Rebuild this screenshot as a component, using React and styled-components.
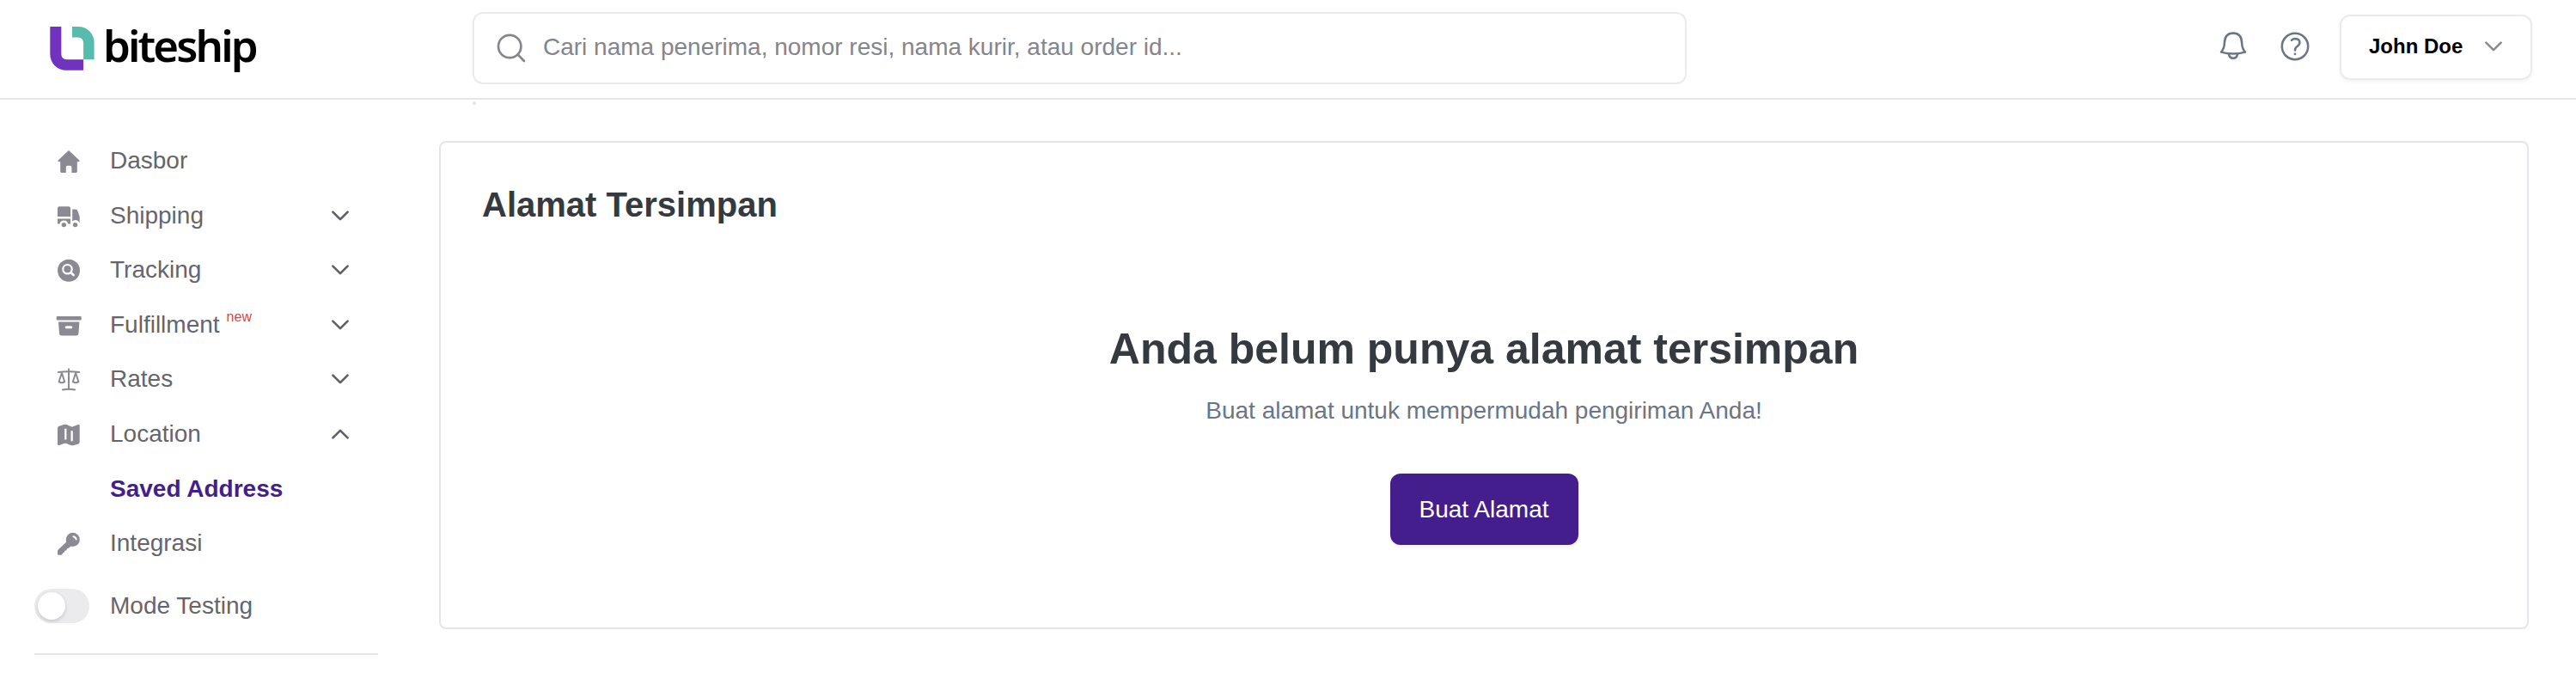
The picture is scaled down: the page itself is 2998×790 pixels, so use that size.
import styled, { createGlobalStyle } from "styled-components";


const NAV_ITEMS = [
   { label: "Dasbor", icon: "home" },
   { label: "Shipping", icon: "truck", arrow: "down" },
   { label: "Tracking", icon: "tracking" , arrow: "down" },
   { label: "Fulfillment", icon: "box", arrow: "down", badge: "new" },
   { label: "Rates", icon: "scale", arrow: "down" },
   { label: "Location", icon: "map", arrow: "up" },
   { label: "Saved Address", active: true },
   { label: "Integrasi", icon: "key" },
]

// icons
const ICONS = {
   home: (
      <path d="M16 4 L28.3 15.6 Q29.4 17 27.6 17.2 H25.8 V28.6 Q25.8 30 24.4 30 H19.4 V23.6 Q19.4 21.8 17.6 21.8 H14.6 Q12.8 21.8 12.8 23.6 V30 H7.6 Q6.2 30 6.2 28.6 V17.2 H4.4 Q2.6 17 3.7 15.6 Z" />
   ),
   truck: (
      <>
         <path d="M5 5.3 H16 Q18 5.3 18 7.3 V17 H3 V7.3 Q3 5.3 5 5.3 Z" />
         <path d="M3 19.4 H18 V25.4 H15.3 A5.1 5.1 0 0 0 5.4 25.4 H3 Z" />
         <path d="M20.2 8.4 H23.6 Q25.8 8.4 26.4 10.4 L28.2 15.6 Q28.7 17 28.7 18.6 V24.8 A5.2 5.2 0 0 0 20.2 22.4 Z" />
         <circle cx="10.3" cy="26.6" r="2.7" />
         <circle cx="23.6" cy="26.6" r="2.7" />
      </>
   ),
   tracking: (
      <>
         <circle cx="16" cy="16.8" r="13" />
         <circle cx="14.5" cy="15.2" r="5.2" fill="none" stroke="#fff" strokeWidth="2.2" />
         <path d="M18.6 19.2 L21.6 22" stroke="#fff" strokeWidth="2.6" strokeLinecap="round" />
      </>
   ),
   box: (
      <>
         <rect x="1.7" y="6" width="29" height="4.6" rx="1" />
         <path
            fillRule="evenodd"
            d="M4 12.5 H28.4 L27.4 26 Q27.2 28.5 24.8 28.5 H7.6 Q5.2 28.5 5 26 Z M13.2 17.2 a1.5 1.5 0 0 0 0 3 H18.8 a1.5 1.5 0 0 0 0 -3 Z"
         />
      </>
   ),
   scale: (
      <g fill="none" stroke="currentColor" strokeWidth="2" strokeLinecap="round" strokeLinejoin="round">
         <path d="M16 4.6 V27.6" />
         <path d="M4 8 Q16 6.4 28 8" />
         <path d="M8.8 28.4 Q16 27 23.2 28.4" />
         <path d="M7.9 8.8 L4.6 19.2 Q7.9 21.4 11.2 19.2 Z" />
         <path d="M24.1 8.8 L20.8 19.2 Q24.1 21.4 27.4 19.2 Z" />
      </g>
   ),
   map: (
      <path
         fillRule="evenodd"
         d="M3 9.4 Q3 7.4 4.8 6.7 L10.4 4.9 Q12 4.4 13.6 5.1 L18.6 7.2 Q19.8 7.6 21 7.2 L27 5 Q28.7 4.6 28.7 6.4 V25 Q28.7 26.8 27.2 27.4 L21.4 29.2 Q19.8 29.6 18.2 29 L13.4 27 Q12 26.6 10.6 27.1 L5 29.1 Q3 29.6 3 27.6 Z M11.2 10 V22.8 L13.4 22.2 V9.6 Z M18.5 12 V24.6 L20.8 24.2 V12.4 Z"
      />
   ),
   key: (
      <>
         <circle cx="20.8" cy="11.8" r="8" />
         <path d="M13 12.6 L13.4 14.4 L3.6 23.8 Q3 24.4 3 25.2 V28.6 Q3 29.8 4.2 29.8 H7 Q8 29.8 8.4 29 L9 27.4 L10.8 26.8 L11.4 24.8 L13.4 24.2 L14 22.2 L16.2 21.6 L18.6 19.2 L21.6 19.4 Z" />
         <path d="M21.4 8.2 A4.4 4.4 0 0 1 24.8 11.6" fill="none" stroke="#fff" strokeWidth="2" strokeLinecap="round" />
      </>
   ),
}

const Chevron = ({ up }) => (
   <svg width="20" height="12" viewBox="0 0 20 12" fill="none" stroke="currentColor" strokeWidth="2.6" strokeLinecap="round" strokeLinejoin="round">
      <path d={up ? "M1.4 10.4 L10 1.8 L18.6 10.4" : "M1.4 1.6 L10 10.2 L18.6 1.6"} />
   </svg>
)

const LogoMark = () => (
   <svg width="52" height="51" viewBox="58 31 52 51">
      <path d="M58.3 31 H71.3 V63.2 Q71.7 68.8 77.4 69.3 H97.1 V81.8 H77.2 A18.7 18.6 0 0 1 58.3 63.3 Z" fill="#7032bf" />
      <path d="M84 31 H91 A18.5 18.2 0 0 1 109.6 49.2 V69.3 H97.1 V49.4 Q96.6 43.8 91 43.4 H84 Z" fill="#57bcad" />
   </svg>
)

const SearchIcon = () => (
   <svg width="34" height="34" viewBox="0 0 34 34" fill="none" stroke="#85858d" strokeWidth="2.7" strokeLinecap="round">
      <circle cx="15.2" cy="15" r="13.2" />
      <path d="M24.8 24.6 L32 32" />
   </svg>
)

const BellIcon = () => (
   <svg width="32" height="34" viewBox="0 0 32 34" fill="none" stroke="currentColor" strokeWidth="2.5" strokeLinecap="round" strokeLinejoin="round">
      <path d="M2 23.6 Q5.8 19.6 5.9 12.6 Q6.4 1.8 16 1.6 Q25.6 1.8 26.1 12.6 Q26.2 19.6 30 23.6 Q16 27.4 2 23.6 Z" />
      <path d="M11 26 A5.1 6 0 0 0 21 26" />
   </svg>
)

const HelpIcon = () => (
   <svg width="34" height="34" viewBox="0 0 34 34" fill="none" stroke="currentColor" strokeWidth="2.5" strokeLinecap="round">
      <circle cx="17" cy="17" r="15.2" />
      <path d="M12.9 9.8 Q14.6 8 17.4 8 Q22.4 8.4 22.4 12.7 Q22.2 15.4 19.3 17.2 Q17 18.6 17 21.4" />
      <circle cx="17" cy="25.8" r="1.4" fill="currentColor" stroke="none" />
   </svg>
)


const App = () => {
   return (
      <>
         <GlobalStyle />
         <Page>
            <Header>
               <Brand>
                  <LogoMark />
                  <BrandName>biteship</BrandName>
               </Brand>
               <SearchBox>
                  <SearchIcon />
                  <span>Cari nama penerima, nomor resi, nama kurir, atau order id...</span>
               </SearchBox>
               <HeaderActions>
                  <BellIcon />
                  <HelpIcon />
                  <UserButton>
                     John Doe
                     <Chevron />
                  </UserButton>
               </HeaderActions>
            </Header>

            <Body>
               <Sidebar>
                  <nav>
                     {
                        NAV_ITEMS.map(({ label, icon, arrow, badge, active }) => (
                           <NavItem key={label} $active={active}>
                              <NavIcon>
                                 {icon && <svg width="32" height="32" viewBox="0 0 32 32" fill="currentColor">{ICONS[icon]}</svg>}
                              </NavIcon>
                              {label}
                              {badge && <NewBadge>{badge}</NewBadge>}
                              {arrow && <NavArrow><Chevron up={arrow === "up"} /></NavArrow>}
                           </NavItem>
                        ))
                     }
                  </nav>
                  <TestingRow>
                     <Switch><Knob /></Switch>
                     Mode Testing
                  </TestingRow>
                  <Divider />
               </Sidebar>

               <Content>
                  <LoadingDot />
                  <Card>
                     <CardTitle>Alamat Tersimpan</CardTitle>
                     <EmptyState>
                        <h2>Anda belum punya alamat tersimpan</h2>
                        <p>Buat alamat untuk mempermudah pengiriman Anda!</p>
                        <PrimaryBtn>Buat Alamat</PrimaryBtn>
                     </EmptyState>
                  </Card>
               </Content>
            </Body>
         </Page>
      </>
   );
}

// styles
const GlobalStyle = createGlobalStyle`
   * {
      box-sizing: border-box;
   }

   body {
      margin: 0;
      background: #fff;
      font-family: "Liberation Sans", Arial, sans-serif;
      font-size: 28px;
      overflow: hidden;
   }

   svg {
      display: block;
      flex-shrink: 0;
   }
`

const Page = styled.div`
   height: 790px;
   overflow: hidden;
`

const Header = styled.header`
   display: flex;
   align-items: flex-start;
   height: 116px;
   padding-right: 51px;
   border-bottom: 2px solid #e5e5ec;
`

const Brand = styled.div`
   display: flex;
   align-items: center;
   gap: 10px;
   width: 550px;
   height: 113px;
   padding-left: 58px;
`

const BrandName = styled.span`
   padding-bottom: 9px;
   color: #000;
   font-family: "Noto Sans", "Open Sans", sans-serif;
   font-size: 51px;
   font-weight: 600;
   letter-spacing: -2.9px;
   line-height: 76px;
`

const SearchBox = styled.div`
   display: flex;
   align-items: center;
   gap: 20px;
   width: 1413px;
   height: 84px;
   margin-top: 14px;
   padding: 0 26px;
   border: 2px solid #ebebed;
   border-radius: 12px;
   color: #85858d;

   & > span {
      padding-bottom: 2px;
   }
`

const HeaderActions = styled.div`
   display: flex;
   align-items: center;
   height: 76px;
   margin: 17px 0 0 auto;
   color: #6b7588;

   & > svg {
      margin: 0 39px 2px 0;
   }

   & > svg + svg {
      margin-right: 35px;
   }
`

const UserButton = styled.button`
   display: flex;
   align-items: center;
   justify-content: space-between;
   width: 224px;
   height: 76px;
   padding: 0 33px 2px 32px;
   background: #fff;
   border: 2px solid #ebebed;
   border-radius: 12px;
   box-shadow: 0 2px 4px rgba(0, 0, 0, .06);
   color: #000;
   font-family: inherit;
   font-size: 24px;
   font-weight: 700;

   & > svg {
      color: #8a8a93;
   }
`

const Body = styled.div`
   display: flex;
`

const Sidebar = styled.aside`
   width: 440px;
   padding: 39.2px 0 0 40px;
   color: #65656d;
`

const NavItem = styled.div`
   display: flex;
   align-items: center;
   height: 63.6px;
   padding: 0 34px 0 24px;
   color: ${({ $active }) => $active ? "#451e8d" : "inherit"};
   font-weight: ${({ $active }) => $active ? 700 : 400};
`

const NavIcon = styled.span`
   width: 32px;
   height: 32px;
   margin-right: 32px;
   color: #8b8991;
`

const NavArrow = styled.span`
   margin-left: auto;
   color: #5f5f68;
`

const NewBadge = styled.sup`
   align-self: flex-start;
   margin: 13px 0 0 8px;
   color: #e0443e;
   font-size: 16px;
   line-height: 20px;
`

const TestingRow = styled.div`
   display: flex;
   align-items: center;
   gap: 24px;
   height: 40px;
   margin-top: 21px;
`

const Switch = styled.div`
   display: flex;
   align-items: center;
   width: 64px;
   height: 40px;
   padding: 0 4px;
   border-radius: 20px;
   background: #ebebed;
`

const Knob = styled.span`
   width: 32px;
   height: 32px;
   border-radius: 50%;
   background: #fff;
   box-shadow: 0 2px 4px rgba(0, 0, 0, .16);
`

const Divider = styled.hr`
   height: 2px;
   margin: 35px 0 0;
   border: none;
   background: #e5e5ec;
`

const Content = styled.main`
   flex-grow: 1;
   padding: 2px 55px 0 71px;
`

const LoadingDot = styled.div`
   width: 4px;
   height: 4px;
   margin-left: 39px;
   border-radius: 50%;
   background: #e5e5e9;
`

const Card = styled.section`
   height: 568px;
   margin-top: 42px;
   padding: 48px 48px 0;
   border: 2px solid #e5e5ec;
   border-radius: 8px;
`

const CardTitle = styled.h1`
   margin: 0;
   color: #343a3f;
   font-size: 40px;
   line-height: 48px;
`

const EmptyState = styled.div`
   display: flex;
   flex-direction: column;
   align-items: center;

   & > h2 {
      margin: 114px 0 0;
      color: #343a3f;
      font-size: 50px;
      line-height: 60px;
   }

   & > p {
      margin: 24px 0 0;
      color: #6b7588;
      line-height: 36px;
   }
`

const PrimaryBtn = styled.button`
   width: 219px;
   height: 83px;
   margin-top: 55px;
   padding: 0;
   border: none;
   border-radius: 12px;
   background: #451e8d;
   box-shadow: 0 2px 4px rgba(0, 0, 0, .08);
   color: #fff;
   font-family: inherit;
   font-size: 28px;
`


export default App;
